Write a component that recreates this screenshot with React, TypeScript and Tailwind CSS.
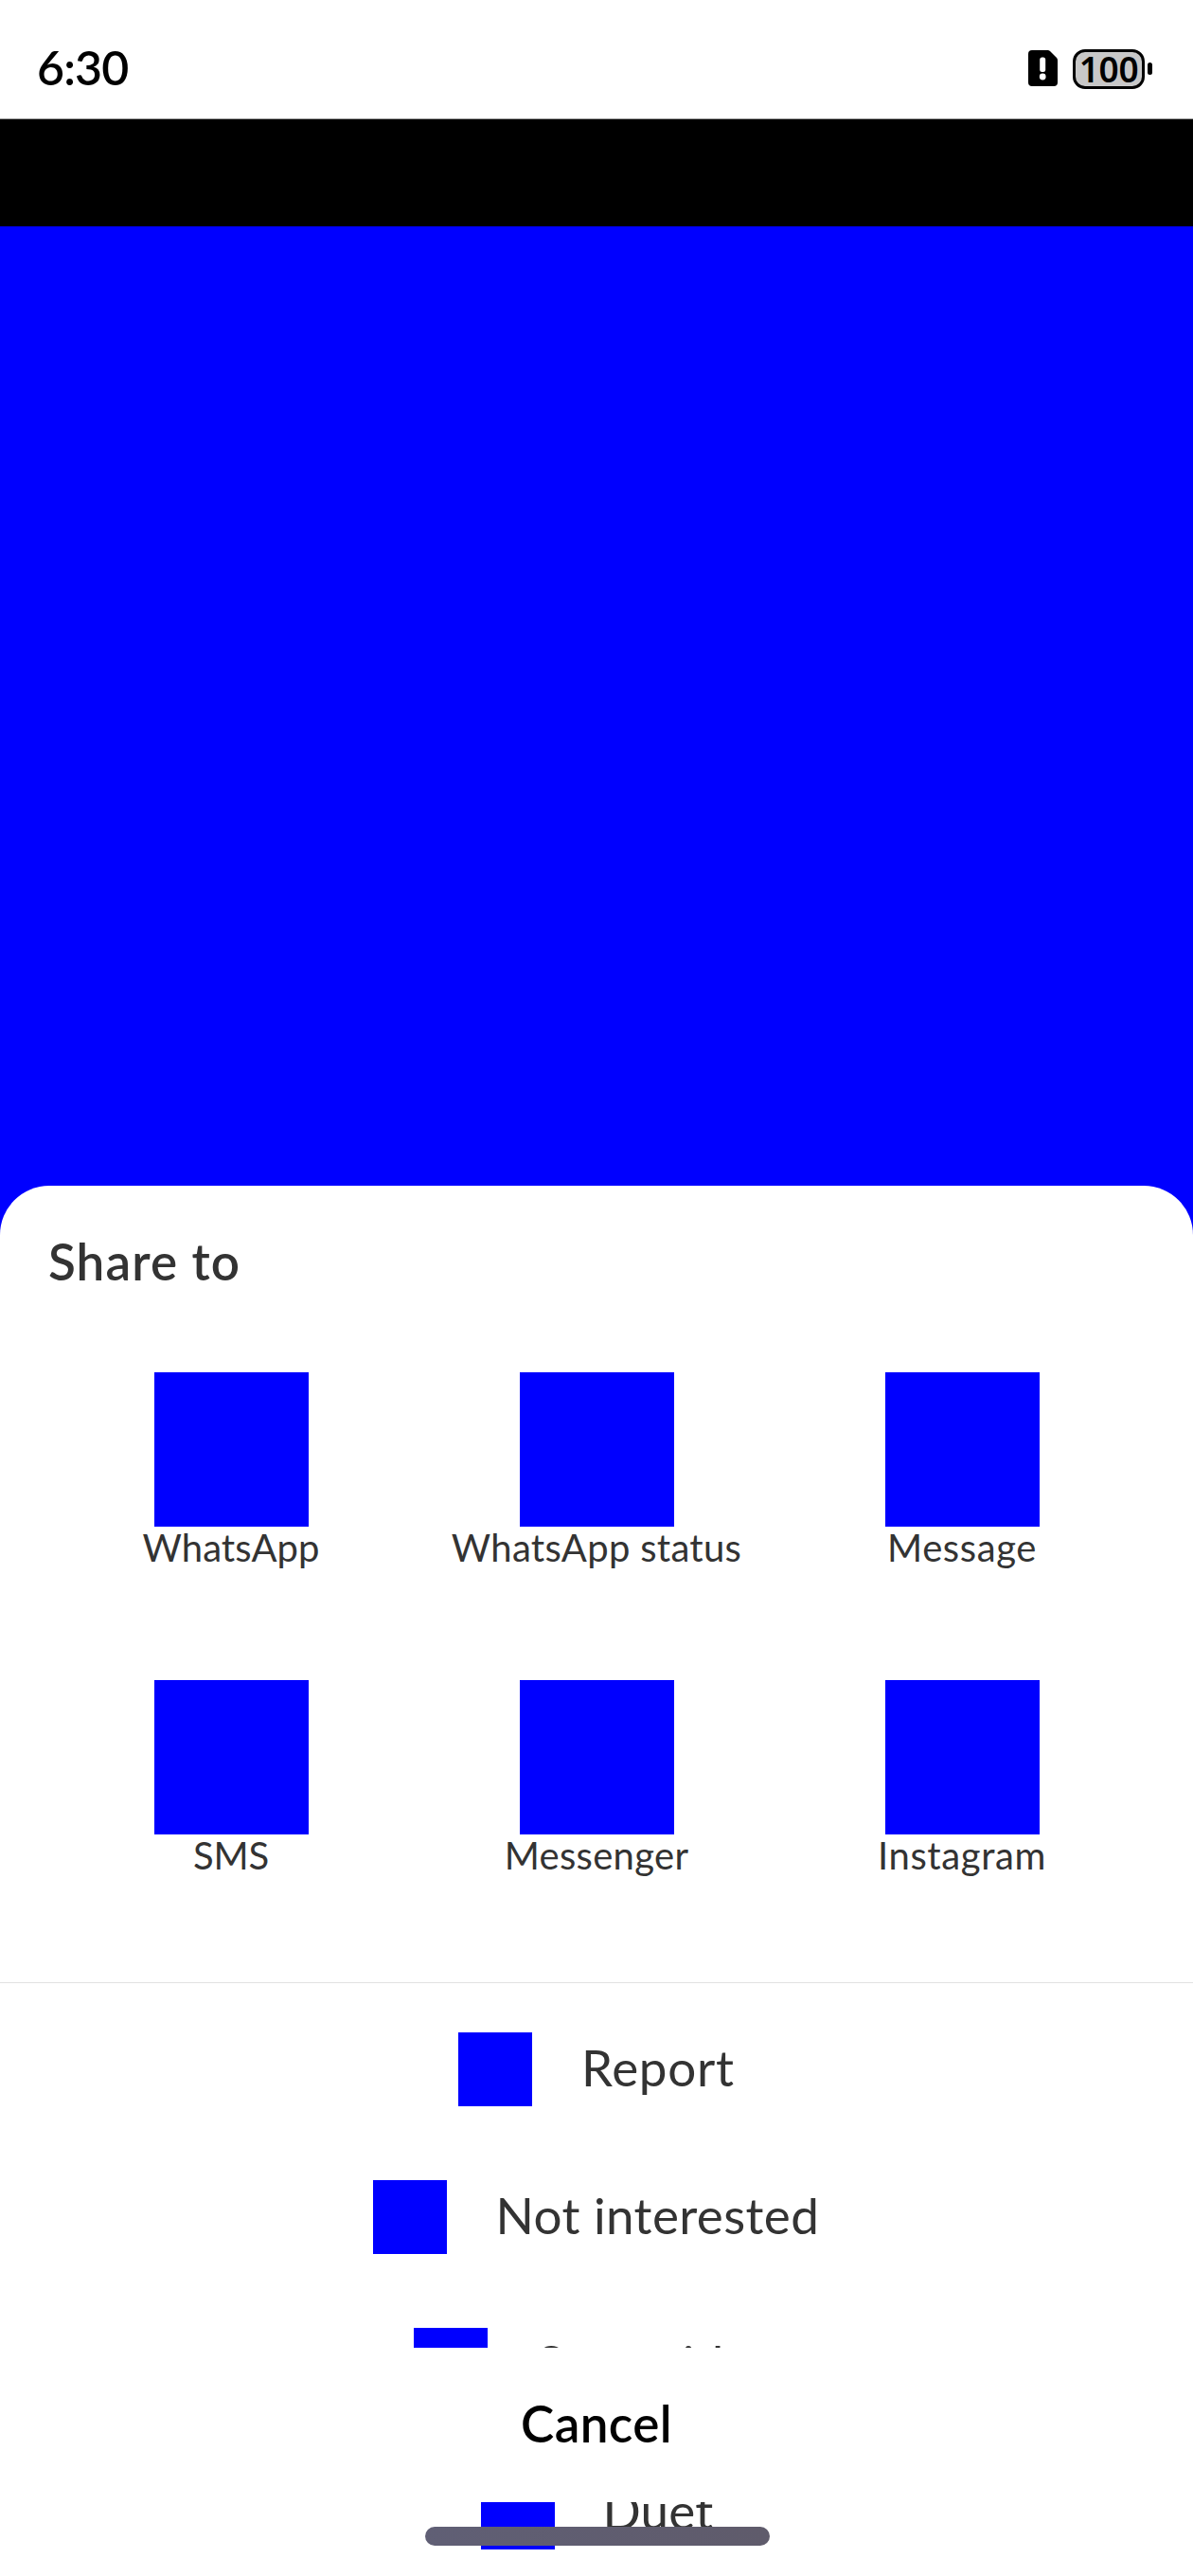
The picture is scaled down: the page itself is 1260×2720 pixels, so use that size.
const apps = [
  { name: "WhatsApp", tracking: "tracking-[0.1px]" },
  { name: "WhatsApp status", tracking: "tracking-[0.3px]" },
  { name: "Message", tracking: "tracking-[0.6px]" },
  { name: "SMS", tracking: "tracking-[-0.2px]" },
  { name: "Messenger", tracking: "tracking-[0.3px]" },
  { name: "Instagram", tracking: "tracking-[0.6px]" },
];

const actions = [
  { name: "Report", text: "w-[162px] tracking-[0.7px]" },
  { name: "Not interested", text: "w-[343px] tracking-[0.4px]" },
  { name: "Save video", text: "w-[256px] tracking-[0.9px]" },
  { name: "Duet", text: "w-[114px] tracking-[0.2px] -indent-[1.5px]" },
];

function StatusBar() {
  return (
    <header className="flex h-[125px] shrink-0 items-start justify-between bg-white pl-[39px] pr-[43px] text-black">
      <span className="mt-[41px] text-[50px] font-semibold leading-[60px] tracking-[-0.8px]">6:30</span>
      <div className="mt-[52px] flex items-start">
        <svg className="mt-px mr-[16px] h-[38px] w-[31px]" viewBox="0 0 31 38">
          <path
            d="M4 0H20.5Q22 0 23 1L30 8Q31 9 31 10.500V34Q31 38 27 38H4Q0 38 0 34V4Q0 0 4 0Z"
            fill="#000"
          />
          <rect x="12.2" y="7.5" width="6" height="15.500" rx="2.500" fill="#fff" />
          <circle cx="15.200" cy="28" r="3.400" fill="#fff" />
        </svg>
        <div className="flex h-[42px] w-[76px] items-center justify-center rounded-[13px] border-[3px] border-black bg-[#c8c8c8]">
          <span className="pb-px font-['Noto_Sans',sans-serif] text-[37px] font-semibold leading-[36px] tracking-[-0.3px]">
            100
          </span>
        </div>
        <div className="ml-[3px] mt-[14px] h-[13px] w-[5px] rounded-[3px] bg-black" />
      </div>
    </header>
  );
}

export default function App() {
  return (
    <div className="relative flex h-[2720px] w-[1260px] flex-col overflow-hidden bg-[#0000ff] font-['Lato',sans-serif] text-[#333333]">
      <StatusBar />
      <div className="h-[114px] shrink-0 border-t border-[#999999] bg-black" />
      <div className="h-[1013px] shrink-0" />

      <section className="relative h-[1468px] shrink-0 overflow-hidden rounded-t-[52px] bg-white pt-[50px]">
        <h1 className="pl-[51px] text-[53px] font-semibold leading-[60px] tracking-[1.1px]">Share to</h1>

        <div className="mt-[87px] grid grid-cols-3 gap-y-[120px] px-[51px]">
          {apps.map((app) => (
            <div key={app.name} className="flex flex-col items-center">
              <div className="size-[163px] bg-[#0000ff]" />
              <span className={`whitespace-nowrap pt-[2px] text-[40px] leading-[40px] ${app.tracking}`}>
                {app.name}
              </span>
            </div>
          ))}
        </div>

        <div className="mt-[114px] h-px bg-[#e2e2e2]" />

        <div className="flex flex-col gap-[78px] pt-[52px]">
          {actions.map((action) => (
            <div key={action.name} className="flex h-[78px] items-center justify-center gap-[52px]">
              <div className="size-[78px] bg-[#0000ff]" />
              <span className={`whitespace-nowrap pb-[4px] text-[53px] leading-[62px] ${action.text}`}>
                {action.name}
              </span>
            </div>
          ))}
        </div>

        <button className="absolute inset-x-0 bottom-[78px] flex h-[163px] items-center justify-center bg-white pb-[4px] text-[53px] font-semibold leading-[62px] tracking-[0.4px] text-black">
          Cancel
        </button>
      </section>

      <div className="absolute bottom-8 left-[449px] h-[20px] w-[364px] rounded-full bg-gradient-to-r from-[#605f75] to-[#5f5b6b]" />
    </div>
  );
}
